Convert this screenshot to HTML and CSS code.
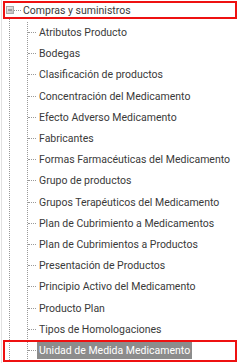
FILE: index.html
```html
<!DOCTYPE html>
<html lang="en">
<head>
    <meta charset="UTF-8">
    <title>Árbol de menú</title>
    <link rel="stylesheet" href="styles.css">
</head>
<body>
    <div class="panel">
        <div class="root-row">
            <svg class="toggle" width="8" height="8" viewBox="0 0 8 8">
                <defs>
                    <linearGradient id="g" x1="0" y1="0" x2="1" y2="1">
                        <stop offset="0" stop-color="#f4f4f4"/>
                        <stop offset="1" stop-color="#b8b8b8"/>
                    </linearGradient>
                </defs>
                <rect x="0.5" y="0.5" width="7" height="7" fill="url(#g)" stroke="#a8a8a8"/>
                <line x1="2" y1="4" x2="6" y2="4" stroke="#666" stroke-width="1"/>
            </svg>
            <span class="root-link"></span>
            <span class="root-label">Compras y suministros</span>
        </div>
        <div class="branch">
            <ul class="items">
                <li><span>Atributos Producto</span></li>
                <li><span>Bodegas</span></li>
                <li><span>Clasificación de productos</span></li>
                <li><span>Concentración del Medicamento</span></li>
                <li><span>Efecto Adverso Medicamento</span></li>
                <li><span>Fabricantes</span></li>
                <li><span>Formas Farmacéuticas del Medicamento</span></li>
                <li><span>Grupo de productos</span></li>
                <li><span>Grupos Terapéuticos del Medicamento</span></li>
                <li><span>Plan de Cubrimiento a Medicamentos</span></li>
                <li><span>Plan de Cubrimientos a Productos</span></li>
                <li><span>Presentación de Productos</span></li>
                <li><span>Principio Activo del Medicamento</span></li>
                <li><span>Producto Plan</span></li>
                <li><span>Tipos de Homologaciones</span></li>
                <li><span class="selected">Unidad de Medida Medicamento</span></li>
            </ul>
        </div>
    </div>
    <div class="mark"></div>
</body>
</html>
```

FILE: styles.css
```css
body { margin: 0; width: 240px; height: 363px; overflow: hidden; background: #fff; font-family: Roboto, "Liberation Sans", sans-serif; font-size: 10.5px; color: #3a3a3a; position: relative; }
.panel { margin-left: 1px; border-left: 1px solid #e2e2e2; height: 363px; padding-top: 1px; box-sizing: border-box; overflow: hidden; }
.root-row { margin: 0 3px 0 1px; height: 18px; border: 2px solid #ee1111; box-sizing: border-box; display: flex; align-items: center; }
.toggle { margin-left: 1px; flex: none; }
.root-link { width: 7px; border-top: 1px dotted #999; flex: none; }
.root-label { margin-left: 2px; white-space: nowrap; }
.branch { margin-left: 7px; border-left: 1px dotted #999; padding-top: 3px; height: 343px; box-sizing: border-box; }
.items { list-style: none; margin: 0 0 0 17px; padding: 0; border-left: 1px dotted #999; }
.items li { height: 21.2px; display: flex; align-items: center; white-space: nowrap; }
.items li::before { content: ""; width: 8px; border-top: 1px dotted #999; margin-right: 3px; flex: none; }
.selected { background: #8c8c8c; color: #fff; margin-left: -2px; padding: 2px 2px; }
.mark { position: absolute; left: 3px; top: 340px; width: 234px; height: 22px; border: 2px solid #ee1111; box-sizing: border-box; }
```
